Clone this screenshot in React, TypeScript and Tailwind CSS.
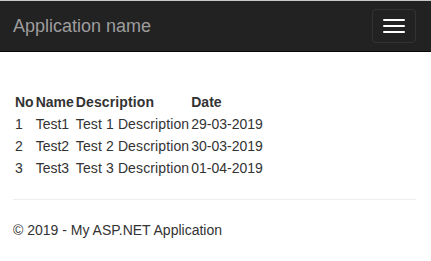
import React from "react";

const rows = [
  { no: "1", name: "Test1", desc: "Test 1 Description", date: "29-03-2019" },
  { no: "2", name: "Test2", desc: "Test 2 Description", date: "30-03-2019" },
  { no: "3", name: "Test3", desc: "Test 3 Description", date: "01-04-2019" },
];

export default function App() {
  return (
    <div
      className="min-h-[261px] bg-white text-[14px] leading-[20px] text-[#333333]"
      style={{ fontFamily: '"Liberation Sans", Arial, Helvetica, sans-serif' }}
    >
      <div className="border-t border-t-[#c8c8c8] border-b border-b-[#080808] bg-[#222222]">
        <div className="flex h-[50px] items-start justify-between pl-[13px] pr-[15px]">
          <div className="pt-[15px] text-[18px] leading-[20px] text-[#9d9d9d]">Application name</div>
          <button className="mt-[8px] flex flex-col gap-[4px] rounded-[4px] border border-[#333333] px-[10px] py-[9px]">
            <span className="block h-[2px] w-[22px] rounded-[1px] bg-white" />
            <span className="block h-[2px] w-[22px] rounded-[1px] bg-white" />
            <span className="block h-[2px] w-[22px] rounded-[1px] bg-white" />
          </button>
        </div>
      </div>
      <div className="pl-[13px] pr-[15px] pt-[39px]">
        <table className="ml-px">
          <thead>
            <tr>
              <th className="p-px text-left font-bold">No</th>
              <th className="p-px text-left font-bold">Name</th>
              <th className="p-px text-left font-bold tracking-[0.12px]">Description</th>
              <th className="p-px text-left font-bold">Date</th>
            </tr>
          </thead>
          <tbody>
            {rows.map((r) => (
              <tr key={r.no}>
                <td className="p-px">{r.no}</td>
                <td className="p-px">{r.name}</td>
                <td className="p-px tracking-[0.12px]">{r.desc}</td>
                <td className="p-px">{r.date}</td>
              </tr>
            ))}
          </tbody>
        </table>
        <hr className="my-[20px] border-t border-[#eeeeee]" />
        <footer>
          <p className="mb-[10px]">© 2019 - My ASP.NET Application</p>
        </footer>
      </div>
    </div>
  );
}
